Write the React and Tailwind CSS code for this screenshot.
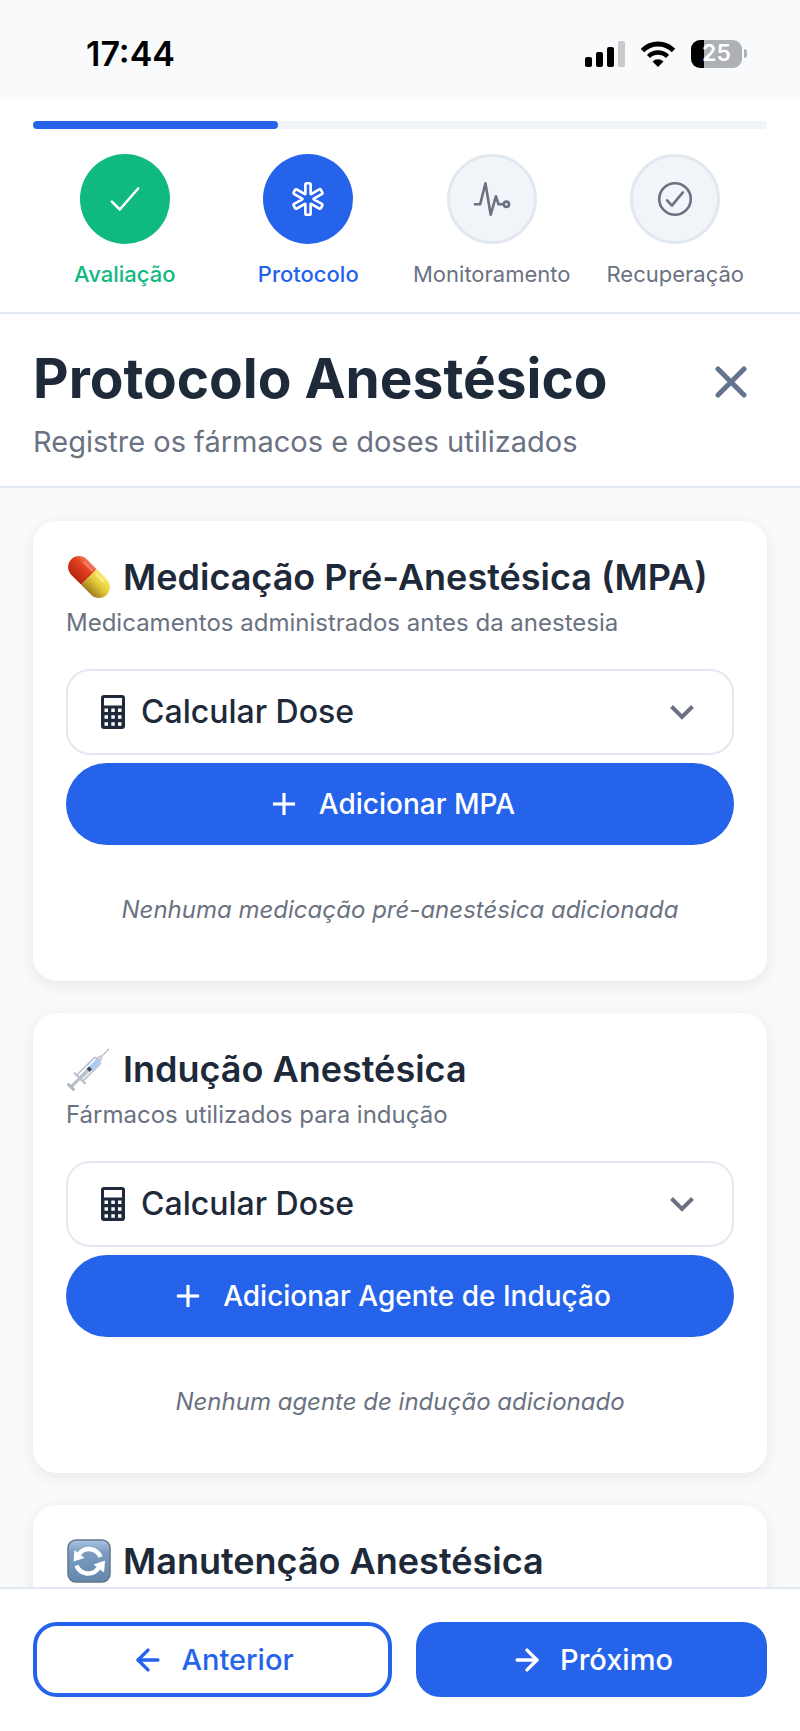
import { useState } from "react"
import { ArrowLeft, ArrowRight, Plus } from "lucide-react"
import {
  IoCheckmarkCircleOutline,
  IoCheckmarkOutline,
  IoMedicalOutline,
  IoPulseOutline,
} from "react-icons/io5"

const STEPS = [
  { label: "Avaliação", icon: IoCheckmarkOutline, status: "done" },
  { label: "Protocolo", icon: IoMedicalOutline, status: "current" },
  { label: "Monitoramento", icon: IoPulseOutline, status: "pending" },
  { label: "Recuperação", icon: IoCheckmarkCircleOutline, status: "pending" },
]

const CIRCLE_STYLES = {
  done: "bg-[#10b981] text-white",
  current: "bg-[#2563eb] text-white",
  pending: "bg-slate-100 border-3 border-slate-200 text-gray-500",
}

const LABEL_STYLES = {
  done: "text-[#10b981] font-medium",
  current: "text-[#2563eb] font-medium",
  pending: "text-gray-500",
}

const SECTIONS = [
  {
    id: "mpa",
    icon: PillIcon,
    title: "Medicação Pré-Anestésica (MPA)",
    description: "Medicamentos administrados antes da anestesia",
    action: "Adicionar MPA",
    empty: "Nenhuma medicação pré-anestésica adicionada",
  },
  {
    id: "inducao",
    icon: SyringeIcon,
    title: "Indução Anestésica",
    description: "Fármacos utilizados para indução",
    action: "Adicionar Agente de Indução",
    empty: "Nenhum agente de indução adicionado",
  },
  {
    id: "manutencao",
    icon: CycleIcon,
    title: "Manutenção Anestésica",
  },
]

/* ---------------- ICONS ---------------- */

function PillIcon() {
  return (
    <svg viewBox="0 0 44 44" className="size-11" aria-hidden="true">
      <defs>
        <linearGradient id="pillRed" x1="0" y1="0" x2="0" y2="1">
          <stop offset="0" stopColor="#f07a5c" />
          <stop offset="0.35" stopColor="#e2401f" />
          <stop offset="1" stopColor="#b5260f" />
        </linearGradient>
        <linearGradient id="pillYellow" x1="0" y1="0" x2="0" y2="1">
          <stop offset="0" stopColor="#f7ea6a" />
          <stop offset="0.45" stopColor="#e3cb35" />
          <stop offset="1" stopColor="#a07a20" />
        </linearGradient>
      </defs>
      <g transform="rotate(45 22 22)">
        <path d="M22 11H8a11 11 0 0 0 0 22h14z" fill="url(#pillRed)" />
        <path d="M22 11h14a11 11 0 0 1 0 22H22z" fill="url(#pillYellow)" />
        <path d="M8 15h11" stroke="#f4866d" strokeWidth="2" strokeLinecap="round" />
        <path d="M25 15h10" stroke="#f8ef86" strokeWidth="2" strokeLinecap="round" />
      </g>
    </svg>
  )
}

function SyringeIcon() {
  return (
    <svg viewBox="0 0 44 44" className="size-11" aria-hidden="true">
      <g transform="rotate(-45 22 22)" strokeLinecap="round">
        <path d="M39 22h11" stroke="#a3a8b0" strokeWidth="1" />
        <path d="M35 20h3l2 1.3v1.4L38 24h-3z" fill="#cdd5de" stroke="#aab2bc" strokeWidth="0.6" />
        <rect x="9" y="17.5" width="26" height="9" rx="2" fill="#e4e8ed" stroke="#aeb5be" />
        <rect x="23" y="18.5" width="11" height="7" rx="1" fill="#a9cdf2" />
        <rect x="20" y="19.5" width="4" height="5" rx="1.5" fill="#3f4650" />
        <path d="M-3 22h22" stroke="#b9bfc7" strokeWidth="3" />
        <path d="M9 15v14" stroke="#bcc2ca" strokeWidth="2.4" />
        <path d="M-3.500 18.500v7" stroke="#aeb5be" strokeWidth="3" />
        <path d="M11 19.500h22" stroke="#fff" strokeWidth="1.200" />
      </g>
    </svg>
  )
}

function CycleIcon() {
  return (
    <svg viewBox="0 0 44 44" className="size-11" aria-hidden="true">
      <defs>
        <linearGradient id="cycleBg" x1="0" y1="0" x2="0" y2="1">
          <stop offset="0" stopColor="#a9c4e2" />
          <stop offset="0.3" stopColor="#7b9cc0" />
          <stop offset="1" stopColor="#6487ad" />
        </linearGradient>
      </defs>
      <rect x="1" y="1" width="42" height="42" rx="8" fill="url(#cycleBg)" stroke="#66758a" strokeWidth="1.5" />
      <path d="M33.500 18A12.500 12.500 0 0 0 12 15" fill="none" stroke="#fff" strokeWidth="4.500" />
      <path d="M6.500 22.500 7.500 11l10 8z" fill="#fff" />
      <path d="M9.500 26.500A12.500 12.500 0 0 0 31.500 29" fill="none" stroke="#fff" strokeWidth="4.500" />
      <path d="M38 21.500 37 33.500l-10.500-8z" fill="#fff" />
    </svg>
  )
}

function CalculatorIcon() {
  return (
    <svg viewBox="0 0 24 34" className="h-[34px] w-6" fill="currentColor" aria-hidden="true">
      <path
        fillRule="evenodd"
        d="M3 0h18a3 3 0 0 1 3 3v28a3 3 0 0 1-3 3H3a3 3 0 0 1-3-3V3a3 3 0 0 1 3-3zM3 3v7.500h18V3zM3.500 13.500v3.500h3.500v-3.500zM10.300 13.500v3.500h3.500v-3.500zM17 13.500v3.500h3.500v-3.500zM3.500 20.300v3.500h3.500v-3.500zM10.300 20.300v3.500h3.500v-3.500zM17 20.300v3.500h3.500v-3.500zM3.500 27.200v3.500h3.500v-3.500zM10.300 27.200v3.500h3.500v-3.500zM17 27.200v3.500h3.500v-3.500z"
      />
    </svg>
  )
}

function ChevronIcon() {
  return (
    <svg viewBox="0 0 24 24" className="size-6" fill="none" aria-hidden="true">
      <path d="M1.500 6.500 12 17 22.500 6.500" stroke="currentColor" strokeWidth="4" />
    </svg>
  )
}

function CloseIcon() {
  return (
    <svg viewBox="0 0 32 32" className="size-8" fill="none" aria-hidden="true">
      <path d="M3 3l26 26M29 3 3 29" stroke="currentColor" strokeWidth="5" strokeLinecap="round" />
    </svg>
  )
}

/* ---------------- STATUS BAR ---------------- */

function StatusBar() {
  return (
    <div className="flex h-[97px] shrink-0 items-center justify-between pt-2.5 pr-[53px] pl-[86px] text-black">
      <span className="text-[34px] font-semibold">17:44</span>
      <div className="flex items-center gap-4">
        <svg viewBox="0 0 40 26" className="h-[26px] w-10" fill="currentColor" aria-hidden="true">
          <rect x="0" y="16" width="7" height="10" rx="2" />
          <rect x="11" y="11" width="7" height="15" rx="2" />
          <rect x="22" y="6" width="7" height="20" rx="2" />
          <rect x="33" y="0" width="7" height="26" rx="2" fill="#c8cacd" />
        </svg>
        <svg viewBox="0 0 34 26" className="h-[26px] w-[34px]" fill="none" stroke="currentColor" aria-hidden="true">
          <path d="M1.500 9.500a22 22 0 0 1 31 0" strokeWidth="5" />
          <path d="M7.500 15.500a13.500 13.500 0 0 1 19 0" strokeWidth="4.500" />
          <path d="M11.500 20.500a7.800 7.800 0 0 1 11 0L17 26z" fill="currentColor" stroke="none" />
        </svg>
        <div className="flex items-center gap-[2px]">
          <div className="flex h-7 w-[51px] items-center justify-center rounded-[9px] bg-linear-to-r from-black from-26% to-[#adb0b4] to-26% text-[23px] font-semibold text-white">
            25
          </div>
          <div className="h-[9px] w-[3px] rounded-r-full bg-[#adb0b4]" />
        </div>
      </div>
    </div>
  )
}

/* ---------------- STEPPER ---------------- */

function Stepper() {
  return (
    <nav className="shrink-0 border-b-2 border-slate-200 bg-white px-[33px] pt-6 pb-6" aria-label="Etapas">
      <div className="h-2 rounded-full bg-slate-100">
        <div className="h-2 w-1/3 rounded-full bg-[#2563eb]" />
      </div>
      <ol className="mt-[25px] grid grid-cols-4">
        {STEPS.map(({ label, icon: Icon, status }) => (
          <li key={label} className="flex flex-col items-center gap-4">
            <span
              className={`flex size-[90px] items-center justify-center rounded-full ${CIRCLE_STYLES[status]}`}
            >
              <Icon size={42} />
            </span>
            <span className={`text-[22px] leading-7 ${LABEL_STYLES[status]}`}>
              {label}
            </span>
          </li>
        ))}
      </ol>
    </nav>
  )
}

/* ---------------- SECTION CARD ---------------- */

function DoseForm({ action, empty }) {
  const [open, setOpen] = useState(false)

  return (
    <>
      <button
        onClick={() => setOpen(!open)}
        aria-expanded={open}
        className="mt-[26px] flex h-[86px] w-full items-center rounded-3xl border-2 border-slate-200 pr-[38px] pl-[33px] text-gray-800"
      >
        <CalculatorIcon />
        <span className="ml-4 text-[32px] font-medium">Calcular Dose</span>
        <span className="ml-auto text-gray-500">
          <ChevronIcon />
        </span>
      </button>

      <button className="mt-2 flex h-[82px] w-full items-center justify-center gap-4 rounded-[44px] bg-[#2563eb] pr-5 text-[28px] font-medium text-white">
        <Plus size={38} strokeLinecap="butt" />
        {action}
      </button>

      <p className="mt-[47px] text-center text-2xl leading-9 text-gray-500 italic">
        {empty}
      </p>
    </>
  )
}

function SectionCard({ section }) {
  const Icon = section.icon

  return (
    <section className="shrink-0 rounded-3xl bg-white px-[33px] pt-8 pb-[53px] shadow-[0_4px_16px_rgba(0,0,0,0.08)]">
      <h2 className="flex items-center gap-3 pl-px text-[36px] leading-[48px] font-semibold text-gray-800">
        <Icon />
        {section.title}
      </h2>
      {section.description && (
        <p className="mt-0.5 text-2xl leading-10 text-gray-500">
          {section.description}
        </p>
      )}
      {section.action && (
        <DoseForm action={section.action} empty={section.empty} />
      )}
    </section>
  )
}

export default function App() {
  return (
    <div className="flex h-screen flex-col bg-slate-50 font-['Inter',sans-serif]">
      <StatusBar />
      <Stepper />

      <header className="flex shrink-0 items-start justify-between border-b-2 border-slate-200 bg-white pt-7 pr-[53px] pb-6 pl-[33px]">
        <div>
          <h1 className="text-[55px] leading-[72px] font-bold text-gray-800">
            Protocolo Anestésico
          </h1>
          <p className="mt-2 text-[29px] leading-10 text-gray-500">
            Registre os fármacos e doses utilizados
          </p>
        </div>
        <button aria-label="Fechar" className="mt-6 text-slate-500">
          <CloseIcon />
        </button>
      </header>

      <main className="flex min-h-0 flex-1 flex-col gap-8 overflow-y-auto px-[33px] py-[33px] [scrollbar-width:none]">
        {SECTIONS.map((s) => (
          <SectionCard key={s.id} section={s} />
        ))}
      </main>

      <footer className="flex shrink-0 gap-6 border-t-2 border-slate-200 bg-white px-[33px] pt-[33px] pb-[34px]">
        <button className="flex h-[75px] flex-1 items-center justify-center gap-4 rounded-3xl border-4 border-[#2563eb] text-[29px] font-medium text-[#2563eb]">
          <ArrowLeft size={34} strokeWidth={2.4} />
          Anterior
        </button>
        <button className="flex h-[75px] flex-1 items-center justify-center gap-4 rounded-3xl bg-[#2563eb] text-[29px] font-medium text-white">
          <ArrowRight size={34} strokeWidth={2.4} />
          Próximo
        </button>
      </footer>
    </div>
  )
}
